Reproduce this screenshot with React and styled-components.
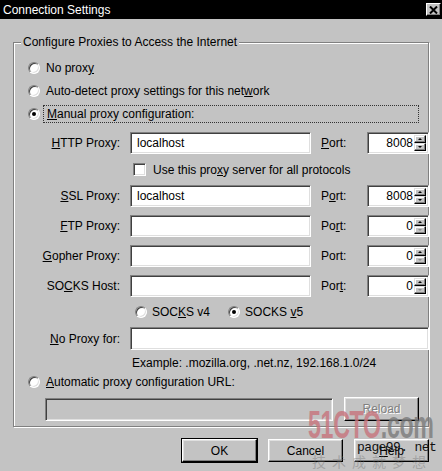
import React from "react";
import styled, { createGlobalStyle, css } from "styled-components";

const GlobalStyle = createGlobalStyle`
  html, body {
    margin: 0;
    padding: 0;
    background: #c3c3c3;
  }
  body {
    font-family: "Liberation Sans", Arial, sans-serif;
    font-size: 12px;
    color: #000;
  }
`;

const Window = styled.div`
  position: relative;
  width: 442px;
  height: 471px;
  background: #c3c3c3;
  overflow: hidden;
  display: flex;
  flex-direction: column;
`;

const TitleBar = styled.div`
  height: 19px;
  flex: none;
  background: #000;
  color: #fff;
  display: flex;
  align-items: center;
  justify-content: space-between;
  padding: 0 1px 0 3px;
  font-size: 12px;
`;

const CloseButton = styled.div`
  width: 15px;
  height: 13px;
  box-sizing: border-box;
  background: #c3c3c3;
  border: 1px solid;
  border-color: #fff #000 #000 #fff;
  box-shadow: inset -1px -1px 0 #808080;
  display: flex;
  align-items: center;
  justify-content: center;
`;

const Body = styled.div`
  padding: 16px 13px 0 13px;
  display: flex;
  flex-direction: column;
`;

const Group = styled.fieldset`
  margin: 0;
  padding: 0 9px 5px 14px;
  border: 1px solid #808080;
  box-shadow: inset 1px 1px 0 #fff, 1px 1px 0 #fff;
  min-width: 0;
`;

const Caption = styled.legend`
  padding: 0 2px;
  margin-left: -7px;
  line-height: 14px;
  background: #c3c3c3;
`;

const RadioList = styled.div`
  padding-top: 9px;
  display: flex;
  flex-direction: column;
  gap: 3px;
`;

const OptionRow = styled.label`
  height: 20px;
  display: flex;
  align-items: center;
  gap: 6px;
  margin-top: ${(p) => p.$mt || 0}px;
  white-space: nowrap;
`;

const RadioDot = styled.span`
  position: relative;
  width: 12px;
  height: 12px;
  flex: none;
  box-sizing: border-box;
  border-radius: 50%;
  background: #fff;
  border: 1px solid;
  border-color: #808080 #fff #fff #808080;
  box-shadow: inset 1px 1px 0 #404040, inset -1px -1px 0 #dfdfdf;
  ${(p) =>
    p.$checked &&
    css`
      &::after {
        content: "";
        position: absolute;
        left: 3px;
        top: 3px;
        width: 4px;
        height: 4px;
        border-radius: 50%;
        background: #000;
      }
    `}
`;

const FocusLabel = styled.span`
  flex: 1;
  margin-left: -3px;
  padding: 1px 3px;
  border: 1px dotted #333;
`;

const ProxyGrid = styled.div`
  margin-top: 8px;
  display: grid;
  grid-template-columns: 92px 181px 36px 62px;
  column-gap: 10px;
  row-gap: 8px;
  align-items: center;
`;

const FieldLabel = styled.span`
  text-align: right;
  white-space: nowrap;
`;

const sunken = css`
  box-sizing: border-box;
  border: 1px solid;
  border-color: #808080 #fff #fff #808080;
  box-shadow: inset 1px 1px 0 #404040, inset -1px -1px 0 #dfdfdf;
`;

const TextBox = styled.div`
  ${sunken}
  height: ${(p) => p.$h || 22}px;
  background: ${(p) => (p.$disabled ? "#c3c3c3" : "#fff")};
  padding: 0 6px;
  display: flex;
  align-items: center;
  grid-column: ${(p) => p.$span || "auto"};
  ${(p) => p.$flex && "flex: 1;"}
`;

const PortLabel = styled.span`
  white-space: nowrap;
`;

const Spinner = styled.div`
  ${sunken}
  height: 22px;
  background: #fff;
  display: flex;
  padding: 2px;
`;

const SpinValue = styled.span`
  flex: 1;
  text-align: right;
  align-self: center;
  padding-right: 1px;
`;

const SpinButtons = styled.div`
  width: 12px;
  display: flex;
  flex-direction: column;
`;

const SpinButton = styled.div`
  flex: 1;
  box-sizing: border-box;
  background: #c3c3c3;
  border: 1px solid;
  border-color: #dfdfdf #000 #000 #dfdfdf;
  box-shadow: inset -1px -1px 0 #808080, inset 1px 1px 0 #fff;
  display: flex;
  align-items: center;
  justify-content: center;
  &::after {
    content: "";
    border-left: 2px solid transparent;
    border-right: 2px solid transparent;
    ${(p) =>
      p.$down
        ? css`border-top: 2px solid ${p.$disabled ? "#8a8a8a" : "#000"};`
        : css`border-bottom: 2px solid #000;`}
  }
`;

const SpanRow = styled.div`
  grid-column: 2 / 5;
  display: flex;
  align-items: center;
  padding-left: ${(p) => p.$pl || 0}px;
  height: ${(p) => p.$h || 15}px;
  margin-top: ${(p) => p.$mt || 0}px;
  white-space: nowrap;
`;

const CheckBox = styled.span`
  ${sunken}
  width: 13px;
  height: 13px;
  flex: none;
  background: #fff;
  margin-right: 7px;
`;

const RadioPair = styled.span`
  display: flex;
  align-items: center;
  gap: 5px;
  margin-right: 18px;
`;

const UrlRow = styled.div`
  margin-top: 5px;
  padding-left: 17px;
  display: flex;
  align-items: center;
  gap: 11px;
`;

const Button = styled.div`
  width: 75px;
  height: ${(p) => p.$h || 23}px;
  box-sizing: border-box;
  display: flex;
  align-items: center;
  justify-content: center;
  border: 1px solid;
  border-color: #fff #000 #000 #fff;
  box-shadow: inset -1px -1px 0 #808080, inset 1px 1px 0 #dfdfdf;
  ${(p) =>
    p.$default &&
    css`
      outline: 1px solid #000;
      outline-offset: 0;
    `}
  ${(p) =>
    p.$disabled &&
    css`
      color: #808080;
      text-shadow: 1px 1px 0 #fff;
    `}
`;

const ButtonBar = styled.div`
  margin-top: 12px;
  display: flex;
  justify-content: flex-end;
  gap: 11px;
`;

const Mark = styled.div`
  position: absolute;
  left: 308px;
  top: 404px;
  font-family: "Liberation Sans", Arial, sans-serif;
  font-weight: bold;
  font-size: 38px;
  line-height: 1.12;
  letter-spacing: -0.5px;
  white-space: nowrap;
  transform: scaleX(0.61);
  transform-origin: left top;
  pointer-events: none;
  opacity: 0.8;
`;

const MarkPart = styled.span`
  color: ${(p) => p.$color};
`;

const MarkSite = styled.div`
  position: absolute;
  left: 357px;
  top: 440px;
  font-family: "Liberation Mono", "Courier New", monospace;
  font-size: 13px;
  letter-spacing: -0.6px;
  white-space: nowrap;
  color: #111;
  pointer-events: none;
`;

const MarkSlogan = styled.div`
  position: absolute;
  left: 312px;
  top: 452px;
  font-family: "Noto Sans CJK SC", sans-serif;
  font-size: 14px;
  line-height: 18px;
  letter-spacing: 6px;
  white-space: nowrap;
  color: rgba(110, 110, 110, 0.4);
  pointer-events: none;
`;

const proxies = [
  { label: <><u>H</u>TTP Proxy:</>, host: "localhost", port: <><u>P</u>ort:</>, value: "8008" },
  { check: true },
  { label: <><u>S</u>SL Proxy:</>, host: "localhost", port: <>P<u>o</u>rt:</>, value: "8008" },
  { label: <><u>F</u>TP Proxy:</>, host: "", port: <>Po<u>r</u>t:</>, value: "0" },
  { label: <><u>G</u>opher Proxy:</>, host: "", port: <>Port:</>, value: "0" },
  { label: <>SO<u>C</u>KS Host:</>, host: "", port: <>Por<u>t</u>:</>, value: "0" },
];

function Spin({ value }) {
  const zero = value === "0";
  return (
    <Spinner>
      <SpinValue>{value}</SpinValue>
      <SpinButtons>
        <SpinButton />
        <SpinButton $down $disabled={zero} />
      </SpinButtons>
    </Spinner>
  );
}

export default function App() {
  return (
    <Window>
      <GlobalStyle />
      <TitleBar>
        <span>Connection Settings</span>
        <CloseButton>
          <svg width="9" height="8" viewBox="0 0 9 8">
            <path d="M1 0.5 L8 7.5 M8 0.5 L1 7.5" stroke="#000" strokeWidth="2" />
          </svg>
        </CloseButton>
      </TitleBar>
      <Body>
        <Group>
          <Caption>Configure Proxies to Access the Internet</Caption>
          <RadioList>
            <OptionRow>
              <RadioDot />
              <span>No prox<u>y</u></span>
            </OptionRow>
            <OptionRow>
              <RadioDot />
              <span>Auto-detect proxy settings for this net<u>w</u>ork</span>
            </OptionRow>
            <OptionRow>
              <RadioDot $checked />
              <FocusLabel><u>M</u>anual proxy configuration:</FocusLabel>
            </OptionRow>
          </RadioList>
          <ProxyGrid>
            {proxies.map((p, i) =>
              p.check ? (
                <SpanRow key={i} $pl={3}>
                  <CheckBox />
                  <span>Use this pro<u>x</u>y server for all protocols</span>
                </SpanRow>
              ) : (
                <React.Fragment key={i}>
                  <FieldLabel>{p.label}</FieldLabel>
                  <TextBox>{p.host}</TextBox>
                  <PortLabel>{p.port}</PortLabel>
                  <Spin value={p.value} />
                </React.Fragment>
              )
            )}
            <SpanRow $pl={5} $h={14}>
              <RadioPair>
                <RadioDot />
                <span>SOC<u>K</u>S v4</span>
              </RadioPair>
              <RadioPair>
                <RadioDot $checked />
                <span>SOCKS <u>v</u>5</span>
              </RadioPair>
            </SpanRow>
            <FieldLabel><u>N</u>o Proxy for:</FieldLabel>
            <TextBox $span="2 / 5" $h={23} />
            <SpanRow $pl={2} $h={14} $mt={-2}>
              Example: .mozilla.org, .net.nz, 192.168.1.0/24
            </SpanRow>
          </ProxyGrid>
          <OptionRow $mt={2}>
            <RadioDot />
            <span><u>A</u>utomatic proxy configuration URL:</span>
          </OptionRow>
          <UrlRow>
            <TextBox $flex $disabled $h={23} />
            <Button $h={24} $disabled>Reload</Button>
          </UrlRow>
        </Group>
        <ButtonBar>
          <Button $default>OK</Button>
          <Button>Cancel</Button>
          <Button><u>H</u>elp</Button>
        </ButtonBar>
      </Body>
      <Mark>
        <MarkPart $color="#c7747c">51CTO</MarkPart>
        <MarkPart $color="#7b7b7b">.com</MarkPart>
      </Mark>
      <MarkSite>page99. net</MarkSite>
      <MarkSlogan>技术成就梦想</MarkSlogan>
    </Window>
  );
}
